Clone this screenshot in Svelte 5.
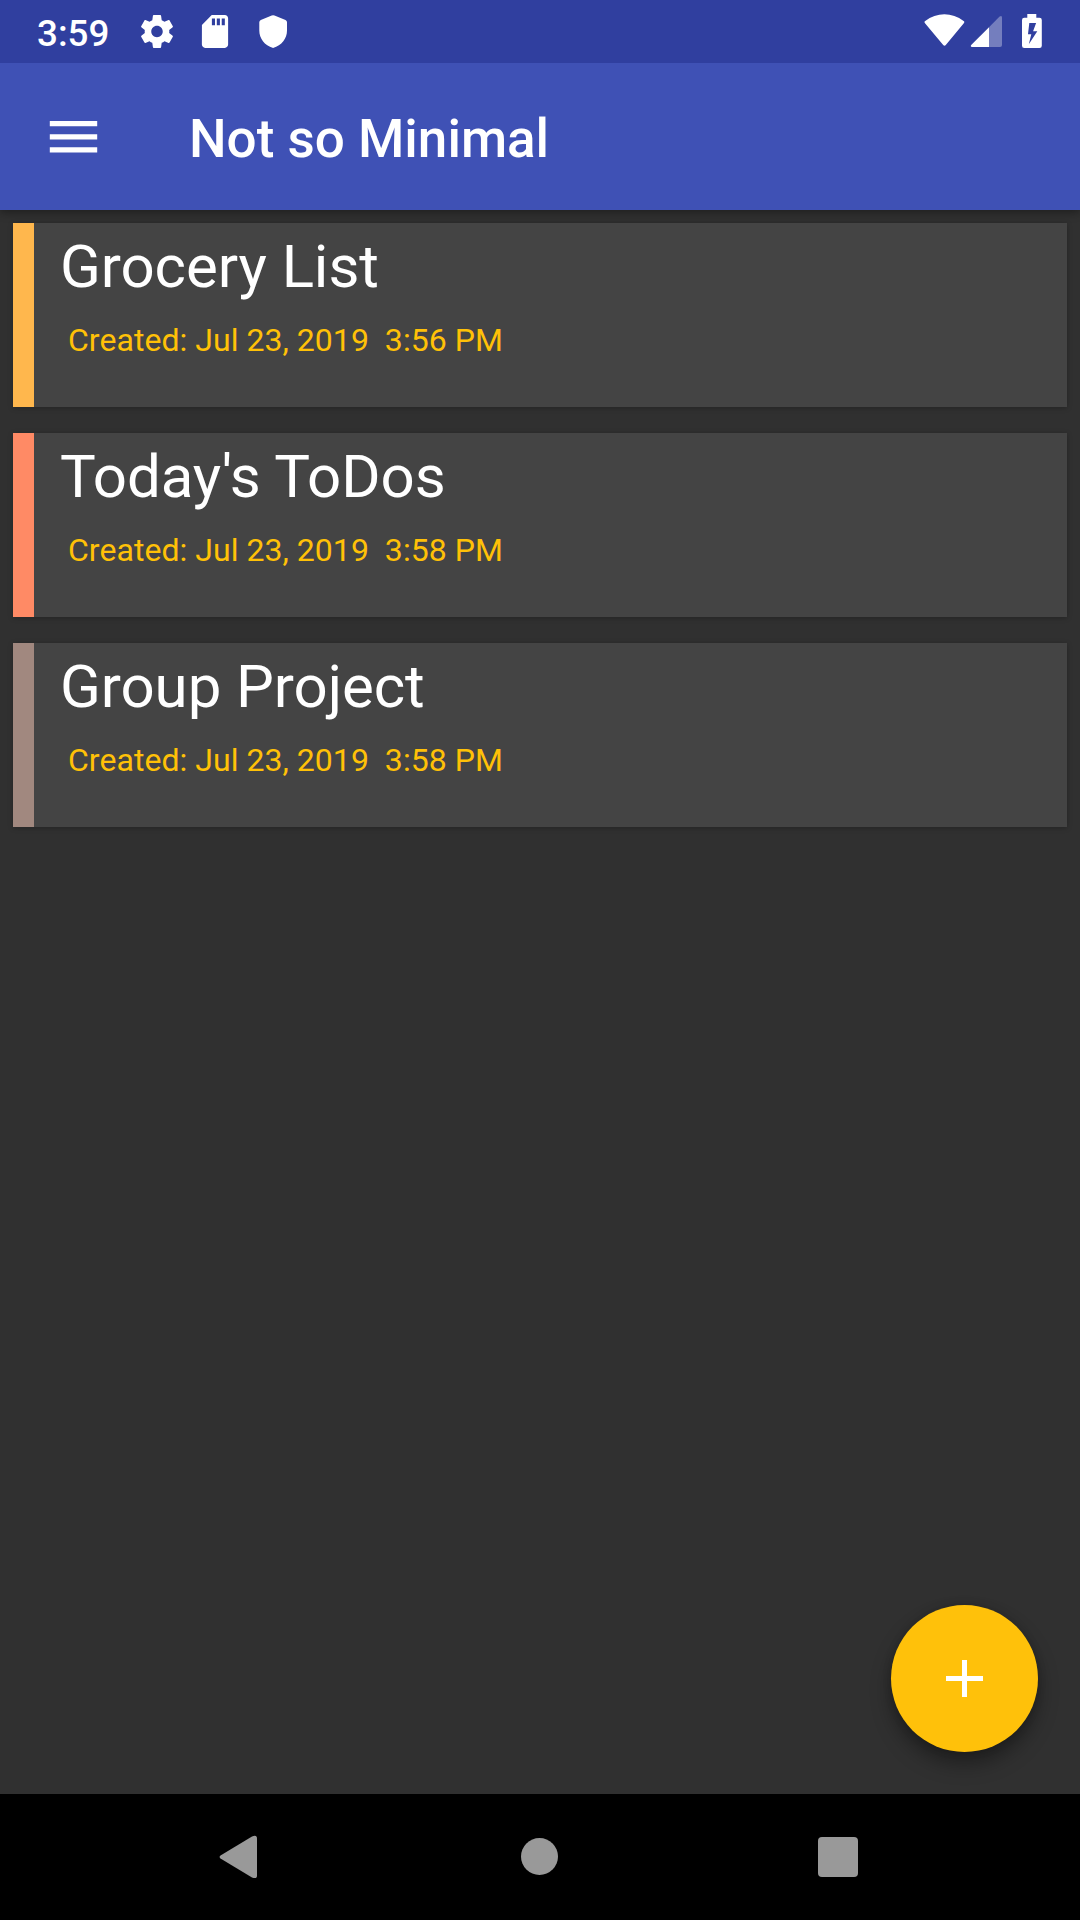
<script>
  const notes = [
    { title: 'Grocery List', created: 'Jul 23, 2019\u00a0 3:56 PM', tone: 'amber' },
    { title: "Today's ToDos", created: 'Jul 23, 2019\u00a0 3:58 PM', tone: 'coral' },
    { title: 'Group Project', created: 'Jul 23, 2019\u00a0 3:58 PM', tone: 'brown' }
  ];
</script>

<div class="screen">
  <header class="status">
    <span class="clock">3:59</span>
    <div class="left-icons">
      <svg width="40" height="41" viewBox="-.2 -.5 24.4 25" aria-hidden="true">
        <path fill="#fff" d="M19.43 12.98c.04-.32.07-.64.07-.98s-.03-.66-.07-.98l2.11-1.65c.19-.15.24-.42.12-.64l-2-3.46c-.12-.22-.39-.3-.61-.22l-2.49 1c-.52-.4-1.08-.73-1.69-.98l-.38-2.65C14.46 2.18 14.25 2 14 2h-4c-.25 0-.46.18-.49.42l-.38 2.65c-.61.25-1.17.59-1.69.98l-2.49-1c-.23-.09-.49 0-.61.22l-2 3.46c-.13.22-.07.49.12.64l2.11 1.65c-.04.32-.07.65-.07.98s.03.66.07.98l-2.11 1.65c-.19.15-.24.42-.12.64l2 3.46c.12.22.39.3.61.22l2.49-1c.52.4 1.08.73 1.69.98l.38 2.65c.03.24.24.42.49.42h4c.25 0 .46-.18.49-.42l.38-2.65c.61-.25 1.17-.59 1.69-.98l2.49 1c.23.09.49 0 .61-.22l2-3.46c.12-.22.07-.49-.12-.64l-2.11-1.65zM12 15.5c-1.93 0-3.5-1.57-3.5-3.5s1.57-3.5 3.5-3.5 3.5 1.57 3.5 3.5-1.57 3.5-3.5 3.5z" />
      </svg>
      <svg width="40" height="41" viewBox="-.2 -.5 24.4 25" aria-hidden="true">
        <path fill="#fff" d="M18 2h-8L4.02 8 4 20c0 1.100.9 2 2 2h12c1.100 0 2-.9 2-2V4c0-1.100-.9-2-2-2zm-6 6.200h-1.900V4H12v4.200zm3 0h-1.900V4H15v4.200zm3 0h-1.900V4H18v4.200z" />
      </svg>
      <svg width="40" height="41" viewBox="253 11 40 41" aria-hidden="true">
        <path fill="#fff" d="M271.700 15.600q1.400-.6 2.800 0l11 4.400q1.500.7 1.500 2.200v8.300c0 8-5.200 14.900-13.900 17.400c-8.600-2.500-13.800-9.400-13.800-17.400v-8.300q0-1.500 1.500-2.200z" />
      </svg>
    </div>
    <div class="right-icons">
      <svg width="42" height="40" viewBox="924 11 42 40" aria-hidden="true">
        <path fill="#fff" d="M925 23.200q-1.200-1.300.2-2.300c11.500-9 26.900-9 38.400 0q1.400 1 .2 2.300l-18 21.800q-1.300 1.300-2.600 0z" />
      </svg>
      <svg width="32" height="40" viewBox="970 11 32 40" aria-hidden="true">
        <path fill="#fff" fill-opacity=".33" d="M989 27.300l10.600-10.800q2.400-1.600 2.400 1v27.500q0 2-2 2h-11z" />
        <path fill="#fff" d="M989 27.300V47h-17q-2-.4-.8-2z" />
      </svg>
      <svg width="20" height="40" viewBox="1021.700 11 20 40" aria-hidden="true">
        <path fill="#fff" fill-rule="evenodd" d="M1027 14h9v3.700h3.200q2.300 0 2.300 2.300v25.700q0 2.300-2.300 2.300h-15.200q-2.300 0-2.300-2.300v-25.700q0-2.300 2.300-2.300h3zM1029 23l-1.300 11.300h3.300l-2.500 10 8.500-13h-4.200l3-8.300z" />
      </svg>
    </div>
  </header>

  <header class="appbar">
    <svg class="menu" width="48" height="32" viewBox="0 0 48 32" aria-label="Menu">
      <path fill="#fff" d="M-.2 0h47.400v5.200H-.2zM-.2 13.200h47.400v5.200H-.2zM-.2 26.300h47.400v5.200H-.2z" />
    </svg>
    <h1>Not so Minimal</h1>
  </header>

  <main>
    {#each notes as note}
      <article class="card {note.tone}">
        <h2>{note.title}</h2>
        <p>Created: {note.created}</p>
      </article>
    {/each}
    <button class="fab" aria-label="Add note">
      <svg width="37" height="37" viewBox="0 0 37 37"><path fill="#fff" d="M16 0h5v16h16v5H21v16h-5V21H0v-5h16z" /></svg>
    </button>
  </main>

  <nav>
    <svg width="38" height="44" viewBox="219 1835 38 44" aria-label="Back">
      <path fill="#999" d="M220.500 1858.600q-1.800-1.600 0-3.200l31.500-19q5-2 5 2v37q0 4-5 2z" />
    </svg>
    <svg class="home" width="37" height="37" viewBox="0 0 37 37" aria-label="Home"><circle cx="18.500" cy="18.500" r="18.500" fill="#999" /></svg>
    <svg width="40" height="40" viewBox="0 0 40 40" aria-label="Recents"><rect width="40" height="40" rx="4" fill="#999" /></svg>
  </nav>
</div>

<style>
  :global(body) {
    margin: 0;
    background: #303030;
  }
  .screen {
    width: 1080px;
    height: 1920px;
    display: flex;
    flex-direction: column;
    background: #303030;
    color: #fff;
    font-family: Roboto, sans-serif;
    overflow: hidden;
  }
  svg {
    display: block;
    flex: none;
  }
  .status {
    height: 63px;
    flex: none;
    box-sizing: border-box;
    position: relative;
    z-index: 2;
    background: #303f9f;
    display: flex;
    align-items: flex-start;
    padding: 11px 38px 0 37px;
  }
  .clock {
    width: 100px;
    font-size: 36.75px;
    font-weight: 500;
    line-height: 45px;
  }
  .left-icons {
    display: flex;
    gap: 18px;
  }
  .right-icons {
    display: flex;
    margin-left: auto;
  }
  .right-icons svg:nth-child(2) {
    margin: 0 20px 0 4px;
  }
  .appbar {
    height: 147px;
    flex: none;
    box-sizing: border-box;
    position: relative;
    z-index: 1;
    background: #3f51b5;
    box-shadow: 0 2px 9px rgba(0, 0, 0, 0.4);
    display: flex;
    align-items: center;
    padding: 0 50px;
  }
  .menu {
    overflow: visible;
  }
  h1 {
    margin: 5px 0 0 91px;
    font-size: 53px;
    line-height: 62px;
    font-weight: 500;
  }
  main {
    flex: 1;
    position: relative;
    display: flex;
    flex-direction: column;
    gap: 26px;
    padding: 13px;
  }
  .card {
    height: 184px;
    box-sizing: border-box;
    background: #444;
    border-left: 21px solid;
    padding: 8px 26px;
    box-shadow: 0 1px 5px rgba(0, 0, 0, 0.25);
  }
  .amber { border-left-color: #ffb74d; }
  .coral { border-left-color: #ff8a65; }
  .brown { border-left-color: #a1887f; }
  h2 {
    margin: 0;
    font-size: 60px;
    line-height: 71px;
    font-weight: 400;
    letter-spacing: -0.07px;
  }
  p {
    margin: 20px 0 0 8px;
    font-size: 32px;
    line-height: 37px;
    letter-spacing: 0.04px;
    color: #ffc107;
  }
  .fab {
    position: absolute;
    right: 42px;
    bottom: 42px;
    width: 147px;
    height: 147px;
    padding: 0;
    border: 0;
    border-radius: 50%;
    background: #ffc10a;
    display: flex;
    align-items: center;
    justify-content: center;
    box-shadow: 0 12px 20px rgba(0, 0, 0, 0.36), 0 0 8px rgba(0, 0, 0, 0.15);
  }
  nav {
    height: 126px;
    flex: none;
    box-sizing: border-box;
    background: #000;
    display: flex;
    justify-content: space-between;
    align-items: center;
    padding: 0 222px 0 219px;
    position: relative;
    z-index: 1;
  }
  .home {
    margin: 0 0 1px 4px;
  }
</style>
